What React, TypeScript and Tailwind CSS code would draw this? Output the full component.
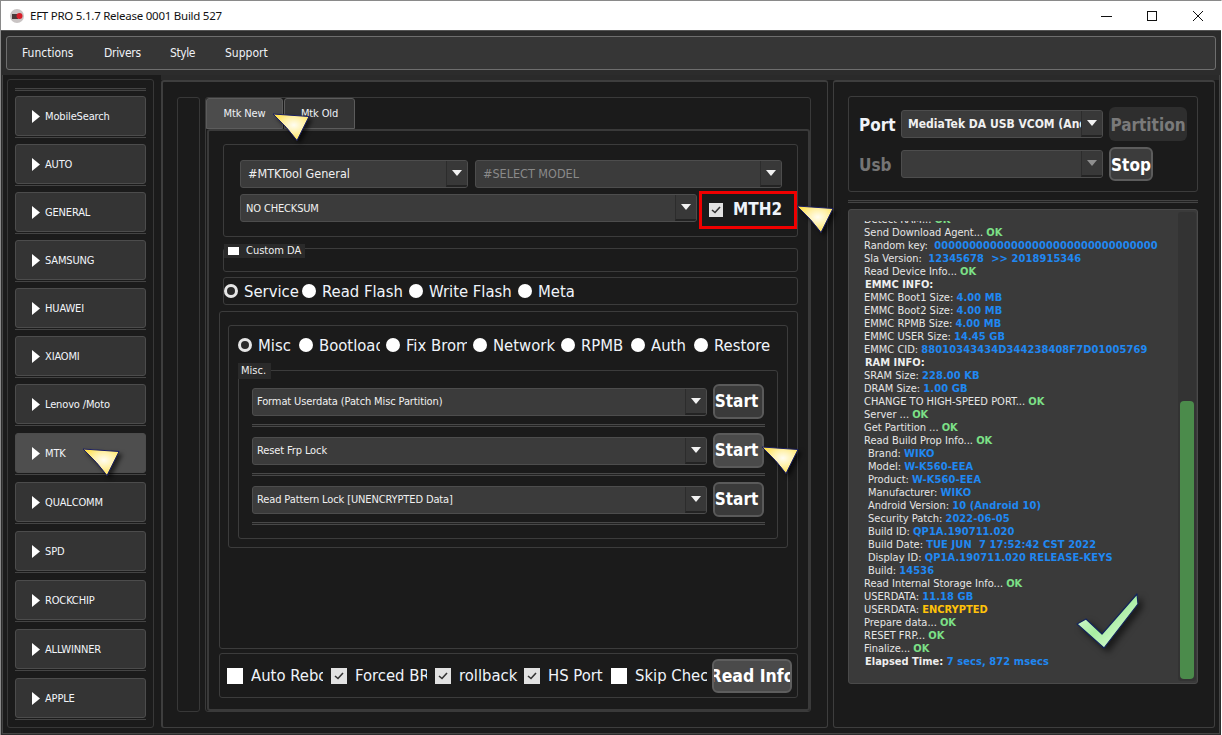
import React from "react";

const F = "[font-family:'DejaVu_Sans_Condensed','Liberation_Sans',sans-serif]";

function Arrow({ className }: { className: string }) {
  return (
    <svg viewBox="0 0 38 29" width="38" height="29" className={"absolute drop-shadow-[3px_3px_2px_rgba(0,0,0,0.6)] " + className}>
      <defs>
        <radialGradient id="arrowFill" cx="0.58" cy="0.42" r="0.6">
          <stop offset="0" stopColor="#fffdf2" />
          <stop offset="0.5" stopColor="#fff0a6" />
          <stop offset="1" stopColor="#ffe04a" />
        </radialGradient>
      </defs>
      <path d="M1 1 L37 3.5 L25 27.5 Q16 15 1 1 Z" fill="url(#arrowFill)" stroke="#1b1f63" strokeWidth="1" strokeLinejoin="round" />
    </svg>
  );
}

function Tri({ dim }: { dim?: boolean }) {
  return (
    <svg width="10" height="6" viewBox="0 0 10 6">
      <path d="M0 0H10L5 6Z" fill={dim ? "#8f8f8f" : "#f2f2f2"} />
    </svg>
  );
}

function Combo({ text, className, textClass, dim }: { text: string; className: string; textClass: string; dim?: boolean }) {
  return (
    <div className={"flex items-stretch shrink-0 rounded-[3px] border border-[#4d4d4d] bg-[#3b3b3b] overflow-hidden " + className}>
      <div className={"flex-1 min-w-0 flex items-center overflow-hidden whitespace-nowrap " + textClass}>{text}</div>
      <div className="w-[21px] flex items-center justify-center bg-[#383838] border-l border-l-[#2c2c2c] border-b-2 border-b-[#232323]">
        <Tri dim={dim} />
      </div>
    </div>
  );
}

function Radio({ text, width, clip, on }: { text: string; width: string; clip?: string; on?: boolean }) {
  return (
    <div className={"flex items-center shrink-0 " + width}>
      <span className={"w-[14px] h-[14px] rounded-full shrink-0 " + (on ? "bg-[#2a2a2a] border-[3px] border-[#e6e6e6]" : "bg-white")} />
      <span className={"ml-[6px] pt-[1px] text-[16.5px] leading-[20px] text-[#f0f4fa] whitespace-nowrap overflow-hidden " + (clip ?? "")}>{text}</span>
    </div>
  );
}

function Check({ text, width, clip, on }: { text: string; width: string; clip: string; on?: boolean }) {
  return (
    <div className={"flex items-center shrink-0 " + width}>
      <span className={"w-[16px] h-[16px] shrink-0 flex items-center justify-center " + (on ? "bg-[#e2e2e2]" : "bg-white")}>
        {on && (
          <svg width="10" height="8" viewBox="0 0 10 8">
            <path d="M1 4 L4 6.5 L9 1" fill="none" stroke="#333" strokeWidth="1.6" />
          </svg>
        )}
      </span>
      <span className={"ml-[8px] text-[16.5px] leading-[20px] text-[#f0f4fa] whitespace-nowrap overflow-hidden " + clip}>{text}</span>
    </div>
  );
}

const side: [string, string][] = [
  ["MobileSearch", "mb-[6px]"],
  ["AUTO", "mb-[6px]"],
  ["GENERAL", "mb-[6px]"],
  ["SAMSUNG", "mb-[6px]"],
  ["HUAWEI", "mb-[6px]"],
  ["XIAOMI", "mb-[6px]"],
  ["Lenovo /Moto", "mb-[7px]"],
  ["MTK", "mb-[7px]"],
  ["QUALCOMM", "mb-[7px]"],
  ["SPD", "mb-[7px]"],
  ["ROCKCHIP", "mb-[7px]"],
  ["ALLWINNER", "mb-[7px]"],
  ["APPLE", "mb-0"],
];

function SideBtn({ text, mb }: { text: string; mb: string }) {
  const active = text === "MTK";
  return (
    <div className={"h-[42px] shrink-0 border-b border-b-[#444] pb-[1px] " + mb}>
      <div className={"h-full rounded-[3px] border border-[#4c4c4c] flex items-center pl-[16px] " + (active ? "bg-[#4e4e4e]" : "bg-[#343434]")}>
        <svg width="8" height="13" viewBox="0 0 8 13"><path d="M0 0L8 6.5L0 13Z" fill="#fff" /></svg>
        <span className="ml-[5px] mt-[2px] text-[11px] tracking-[-0.15px] text-[#f2f5fa] whitespace-nowrap">{text}</span>
      </div>
    </div>
  );
}

const BOLD = "font-bold [font-family:'DejaVu_Sans_Condensed','DejaVu_Sans',sans-serif]";

function StartRow({ text, hover }: { text: string; hover?: boolean }) {
  return (
    <div className="flex flex-col">
      <div className="flex items-center h-[35px]">
        <Combo text={text} className="w-[455px] h-[28px]" textClass="pl-[4px] pt-[2px] text-[11px] tracking-[-0.12px] text-[#f0f0f0]" />
        <div className={"ml-[6px] w-[51px] h-[35px] rounded-[6px] border-2 border-[#5a5a5a] text-white text-[17px] flex items-center justify-center pr-[4px] pt-[1px] " + BOLD + " " + (hover ? "bg-[#4a4a4a]" : "bg-[#3a3a3a]")}>
          Start
        </div>
      </div>
      <div className="h-[3px] mt-[5px] mb-[6px] border-y border-[#484848] bg-[#222]" />
    </div>
  );
}

type Seg = [string, ("b" | "g" | "y" | "w" | "n")?];
const log: { indent?: boolean; segs: Seg[] }[] = [
  { segs: [["Detect RAM... "], ["OK", "g"]] },
  { segs: [["Send Download Agent... "], ["OK", "g"]] },
  { segs: [["Random key:  "], ["00000000000000000000000000000000", "b"]] },
  { segs: [["Sla Version:  "], ["12345678  >> 2018915346", "b"]] },
  { segs: [["Read Device Info... "], ["OK", "g"]] },
  { segs: [["EMMC INFO:", "w"]] },
  { segs: [["EMMC Boot1 Size: "], ["4.00 MB", "b"]] },
  { segs: [["EMMC Boot2 Size: "], ["4.00 MB", "b"]] },
  { segs: [["EMMC RPMB Size: "], ["4.00 MB", "b"]] },
  { segs: [["EMMC USER Size: "], ["14.45 GB", "b"]] },
  { segs: [["EMMC CID: "], ["88010343434D344238408F7D01005769", "b"]] },
  { segs: [["RAM INFO:", "w"]] },
  { segs: [["SRAM Size: "], ["228.00 KB", "b"]] },
  { segs: [["DRAM Size: "], ["1.00 GB", "b"]] },
  { segs: [["CHANGE TO HIGH-SPEED PORT... "], ["OK", "g"]] },
  { segs: [["Server ... "], ["OK", "g"]] },
  { segs: [["Get Partition ... "], ["OK", "g"]] },
  { segs: [["Read Build Prop Info... "], ["OK", "g"]] },
  { indent: true, segs: [["Brand: "], ["WIKO", "b"]] },
  { indent: true, segs: [["Model: "], ["W-K560-EEA", "b"]] },
  { indent: true, segs: [["Product: "], ["W-K560-EEA", "b"]] },
  { indent: true, segs: [["Manufacturer: "], ["WIKO", "b"]] },
  { indent: true, segs: [["Android Version: "], ["10 (Android 10)", "b"]] },
  { indent: true, segs: [["Security Patch: "], ["2022-06-05", "b"]] },
  { indent: true, segs: [["Build ID: "], ["QP1A.190711.020", "b"]] },
  { indent: true, segs: [["Build Date: "], ["TUE JUN  7 17:52:42 CST 2022", "b"]] },
  { indent: true, segs: [["Display ID: "], ["QP1A.190711.020 RELEASE-KEYS", "b"]] },
  { indent: true, segs: [["Build: "], ["14536", "b"]] },
  { segs: [["Read Internal Storage Info... "], ["OK", "g"]] },
  { segs: [["USERDATA: "], ["11.18 GB", "b"]] },
  { segs: [["USERDATA: "], ["ENCRYPTED", "y"]] },
  { segs: [["Prepare data... "], ["OK", "g"]] },
  { segs: [["RESET FRP... "], ["OK", "g"]] },
  { segs: [["Finalize... "], ["OK", "g"]] },
  { segs: [["Elapsed Time: ", "w"], ["7 secs, 872 msecs", "b"]] },
];

const segClass: Record<string, string> = {
  n: "text-[#e6e6e6]",
  w: "text-[#eeeeee] font-bold ml-[1px]",
  b: "text-[#2088f2] font-bold tracking-[0.1px]",
  g: "text-[#7ce087] font-bold",
  y: "text-[#ffc20a] font-bold",
};

export default function App() {
  return (
    <div className={"relative w-[1222px] h-[735px] overflow-hidden flex flex-col bg-[#2c2c2c] border-t border-t-[#8a8a8a] border-l border-l-[#8a8a8a] border-r border-r-white " + F}>
      {/* title bar */}
      <div className="h-[30px] shrink-0 bg-white flex items-center pl-[9px] pr-[17px] border-b border-b-[#555]">
        <svg width="14" height="14" viewBox="0 0 14 14">
          <circle cx="7" cy="7" r="7" fill="#c9c4c4" />
          <path d="M2 5H8V10H2Z" fill="#4a3a3a" />
          <circle cx="9.5" cy="7" r="3" fill="#d81e2a" />
        </svg>
        <span className="ml-[6px] text-[11.5px] text-[#111] [font-family:'Noto_Sans',sans-serif] tracking-[-0.25px]">EFT PRO 5.1.7 Release 0001 Build 527</span>
        <div className="flex-1" />
        <svg width="12" height="12" viewBox="0 0 12 12" className="mr-[33px]"><path d="M0 6.5H11" stroke="#111" /></svg>
        <svg width="12" height="12" viewBox="0 0 12 12" className="mr-[34px]"><rect x="1.5" y="1.5" width="9" height="9" fill="none" stroke="#111" /></svg>
        <svg width="12" height="12" viewBox="0 0 12 12"><path d="M1 1L11 11M11 1L1 11" stroke="#111" /></svg>
      </div>

      {/* menu */}
      <div className="mx-[5px] mt-[5px] h-[34px] shrink-0 rounded-[3px] border border-[#6e6e6e] bg-[#363636] flex items-center pl-[15px] gap-[30px] text-[12px] text-[#f0f2f6] whitespace-nowrap">
        <span className="w-[52px]">Functions</span>
        <span className="w-[36px] tracking-[-0.3px]">Drivers</span>
        <span className="w-[25px] tracking-[-0.4px]">Style</span>
        <span className="w-[42px]">Support</span>
      </div>

      {/* main */}
      <div className="flex-1 flex mt-[5px] ml-[1px] mr-[1px] mb-[1px] min-h-0 bg-[#1b1b1b] border-l border-b border-r border-[#444]">
        {/* sidebar */}
        <div className="w-[158px] shrink-0 pt-[4px] pl-[4px] pr-[7px] pb-[5px] flex">
          <div className="flex-1 rounded-[3px] border border-[#383838] px-[7px] pt-[8px] flex flex-col">
            <div className="h-[3px] border-y border-[#444] bg-[#222] mb-[5px]" />
            {side.map(([t, mb]) => (
              <SideBtn key={t} text={t} mb={mb} />
            ))}
          </div>
        </div>

        <div className="flex-1 min-w-0 flex flex-col">
          <div className="h-[5px] shrink-0 bg-[#2a2a2a]" />
          <div className="flex-1 min-h-0 flex gap-[5px] pb-[5px] pr-[4px]">
            {/* center */}
            <div className="w-[667px] shrink-0 border-l-2 border-t-2 border-r border-b border-[#3e3e3e] rounded-[3px] pt-[15px] pl-[14px] flex">
              <div className="w-[23px] h-[615px] shrink-0 rounded-[3px] border border-[#383838]" />
              <div className="ml-[5px] w-[606px] h-[615px] shrink-0 rounded-[3px] border border-[#3a3a3a] flex flex-col">
                <div className="h-[31px] shrink-0 flex text-[11px] tracking-[-0.15px] text-[#eef1f6]">
                  <div className="w-[77px] pt-[2px] bg-[#4c4c4c] border border-[#5c5c5c] rounded-t-[3px] flex items-center justify-center">Mtk New</div>
                  <div className="ml-[1px] w-[71px] pt-[2px] bg-[#353535] border border-[#5c5c5c] rounded-t-[3px] flex items-center justify-center">Mtk Old</div>
                </div>
                <div className="flex-1 ml-[1px] rounded-[3px] border-2 border-[#3a3a3a] pl-[10px] pt-[13px]">
                  {/* group 1 */}
                  <div className="ml-[4px] w-[575px] h-[93px] rounded-[3px] border border-[#3c3c3c] pl-[16px] pt-[15px]">
                    <div className="flex gap-[7px]">
                      <Combo text="#MTKTool General" className="w-[228px] h-[28px]" textClass="pl-[7px] pt-[1px] text-[12.5px] text-[#f0f0f0]" />
                      <Combo text="#SELECT MODEL" className="w-[307px] h-[28px]" textClass="pl-[7px] pt-[1px] text-[12.5px] text-[#8a8a8a]" />
                    </div>
                    <div className="flex mt-[6px] items-start">
                      <Combo text="NO CHECKSUM" className="w-[457px] h-[28px]" textClass="pl-[5px] pt-[2px] text-[11px] tracking-[-0.15px] text-[#f0f0f0]" />
                      <div className="ml-[2px] -mt-[3px] w-[98px] h-[38px] border-[3px] border-[#f00000] flex items-center pl-[7px]">
                        <span className="w-[14px] h-[14px] bg-[#e2e2e2] flex items-center justify-center">
                          <svg width="10" height="8" viewBox="0 0 10 8"><path d="M1 4 L4 6.5 L9 1" fill="none" stroke="#333" strokeWidth="1.6" /></svg>
                        </span>
                        <span className={"ml-[10px] text-[17px] text-[#eef3fa] " + BOLD}>MTH2</span>
                      </div>
                    </div>
                  </div>

                  {/* custom DA */}
                  <div className="relative ml-[4px] mt-[11px] w-[575px] h-[24px] rounded-[3px] border border-[#3c3c3c]">
                    <div className="absolute left-[0px] top-[-5px] w-[81px] h-[14px] bg-[#2a2a2a] flex items-center pl-[4px] text-[11px] text-[#f0f0f0]">
                      <span className="w-[11px] h-[8px] bg-white shrink-0" />
                      <span className="ml-[7px] whitespace-nowrap">Custom DA</span>
                    </div>
                  </div>

                  {/* radios */}
                  <div className="ml-[4px] mt-[5px] w-[575px] h-[28px] rounded-[3px] border border-[#3c3c3c] flex items-center">
                    <Radio on text="Service" width="w-[78px]" />
                    <Radio text="Read Flash" width="w-[107px]" />
                    <Radio text="Write Flash" width="w-[109px]" />
                    <Radio text="Meta" width="w-[70px]" />
                  </div>

                  {/* big group */}
                  <div className="mt-[6px] w-[579px] h-[338px] rounded-[3px] border border-[#3c3c3c] pl-[8px] pt-[13px]">
                    <div className="w-[560px] h-[223px] rounded-[3px] border border-[#3c3c3c] pl-[9px]">
                      <div className="h-[36px] mt-[1px] flex items-center">
                        <Radio on text="Misc" width="w-[61px]" clip="w-[35px]" />
                        <Radio text="Bootloader" width="w-[87px]" clip="w-[61px]" />
                        <Radio text="Fix Brom" width="w-[87px]" clip="w-[61px]" />
                        <Radio text="Network" width="w-[88px]" clip="w-[63px]" />
                        <Radio text="RPMB" width="w-[70px]" />
                        <Radio text="Auth" width="w-[63px]" />
                        <Radio text="Restore" width="w-[80px]" />
                      </div>
                      <div className="relative mt-[7px] w-[540px] h-[169px] rounded-[3px] border border-[#3c3c3c] pl-[13px] pt-[13px] pr-[12px]">
                        <div className="absolute left-[-1px] top-[-8px] w-[33px] h-[16px] bg-[#2a2a2a] pl-[3px] text-[11px] leading-[15px] text-[#f0f0f0]">Misc.</div>
                        <StartRow text="Format Userdata (Patch Misc Partition)" />
                        <StartRow text="Reset Frp Lock" hover />
                        <StartRow text="Read Pattern Lock [UNENCRYPTED Data]" />
                      </div>
                    </div>
                  </div>

                  {/* bottom */}
                  <div className="mt-[4px] w-[579px] h-[45px] rounded-[3px] border border-[#3c3c3c] flex items-center pl-[7px]">
                    <Check text="Auto Reboot" width="w-[104px]" clip="w-[72px]" />
                    <Check on text="Forced BROM" width="w-[104px]" clip="w-[72px]" />
                    <Check on text="rollback" width="w-[89px]" clip="w-[60px]" />
                    <Check on text="HS Port" width="w-[87px]" clip="w-[60px]" />
                    <Check text="Skip Check" width="w-[101px]" clip="w-[72px]" />
                    <div className={"w-[80px] h-[34px] shrink-0 rounded-[6px] border-2 border-[#5e5e5e] bg-[#4a4a4a] text-white text-[17.5px] pt-[1px] flex items-center justify-center overflow-hidden whitespace-nowrap " + BOLD}>
                      Read Info
                    </div>
                  </div>
                </div>
              </div>
            </div>

            {/* right */}
            <div className="flex-1 min-w-0 border-l border-t-2 border-r border-b border-[#3e3e3e] rounded-[3px] pt-[14px] pl-[14px]">
              <div className="w-[350px] h-[96px] rounded-[3px] border border-[#3c3c3c] pl-[10px] pt-[10px] flex flex-col gap-[6px]">
                <div className="flex items-center h-[34px]">
                  <span className={"w-[42px] pt-[3px] text-[17px] text-[#f0f3f8] " + BOLD}>Port</span>
                  <Combo text="MediaTek DA USB VCOM (Android)" className="w-[202px] h-[28px]" textClass={"pl-[6px] pr-[5px] text-[12px] text-[#f0f0f0] " + BOLD} />
                  <div className={"ml-[6px] w-[78px] h-[34px] pt-[3px] rounded-[6px] bg-[#2e2e2e] text-[#7a7a7a] text-[17px] flex items-center justify-center " + BOLD}>Partition</div>
                </div>
                <div className="flex items-center h-[34px]">
                  <span className={"w-[42px] pt-[3px] text-[17px] text-[#757575] " + BOLD}>Usb</span>
                  <Combo dim text="" className="w-[202px] h-[28px]" textClass="" />
                  <div className={"ml-[6px] w-[44px] h-[34px] pt-[3px] rounded-[6px] border-2 border-[#5c5c5c] bg-[#3c3c3c] text-white text-[17px] flex items-center justify-center " + BOLD}>Stop</div>
                </div>
              </div>
              <div className="w-[350px] h-[3px] mt-[8px] border-y border-[#444] bg-[#222]" />
              <div className="mt-[6px] w-[350px] h-[475px] rounded-[3px] border border-[#4a4a4a] bg-[#3a3a3a] flex">
                <div className="flex-1 min-w-0 mt-[11px] mb-[15px] pl-[15px] overflow-hidden flex flex-col justify-end text-[11px] leading-[13px] whitespace-pre">
                  {log.map((l, i) => (
                    <div key={i} className={"h-[13px] shrink-0 " + (l.indent ? "pl-[4px]" : "")}>
                      {l.segs.map(([t, k], j) => (
                        <span key={j} className={segClass[k ?? "n"]}>{t}</span>
                      ))}
                    </div>
                  ))}
                </div>
                <div className="w-[18px] my-[2px] mr-[1px] rounded-[3px] bg-[#333] flex flex-col justify-end p-[2px]">
                  <div className="h-[278px] rounded-[4px] bg-[#4b8b4b]" />
                </div>
              </div>
            </div>
          </div>
        </div>
      </div>

      {/* overlays */}
      <Arrow className="left-[271px] top-[112px]" />
      <Arrow className="left-[81px] top-[447px]" />
      <Arrow className="left-[795px] top-[204px]" />
      <Arrow className="left-[760px] top-[445px]" />
      <svg viewBox="0 0 64 58" width="64" height="58" className="absolute left-[1075px] top-[591px] drop-shadow-[4px_4px_3px_rgba(0,0,0,0.55)]">
        <defs>
          <linearGradient id="checkFill" x1="0" y1="0" x2="1" y2="1">
            <stop offset="0" stopColor="#f0ffec" />
            <stop offset="0.5" stopColor="#a8eea2" />
            <stop offset="1" stopColor="#f2fff0" />
          </linearGradient>
        </defs>
        <path d="M1 32 L10 27 L26 42 L61 2 L62 12 L28 56 Z" fill="url(#checkFill)" stroke="#13245a" strokeWidth="1.2" strokeLinejoin="round" />
      </svg>
    </div>
  );
}
